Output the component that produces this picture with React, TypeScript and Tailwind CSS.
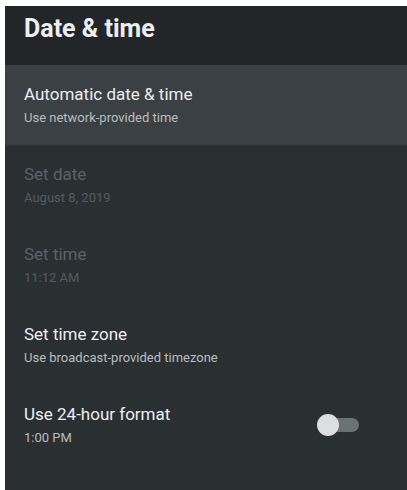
export default function App() {
  const rows = [
    { title: 'Automatic date & time', sub: 'Use network-provided time', active: true },
    { title: 'Set date', sub: 'August 8, 2019', disabled: true },
    { title: 'Set time', sub: '11:12 AM', disabled: true },
    { title: 'Set time zone', sub: 'Use broadcast-provided timezone' },
    { title: 'Use 24-hour format', sub: '1:00 PM', toggle: true },
  ];

  return (
    <div className="w-[407px] h-[490px] bg-white pl-[5px] pt-[6px] overflow-hidden" style={{ fontFamily: 'Roboto, "Noto Sans", sans-serif' }}>
      <div className="h-full bg-[#2a2f32] flex flex-col">
        <div className="h-[59px] bg-[#222628] pl-[19px] flex items-center pb-[14px]">
          <h1 className="text-[25px] leading-[30px] font-bold text-[#eceeef]">Date &amp; time</h1>
        </div>
        {rows.map((r) => (
          <div
            key={r.title}
            className={`h-[80px] pl-[19px] pr-[48px] flex items-center justify-between ${r.active ? 'bg-[#3a4043]' : ''}`}
          >
            <div className="flex flex-col">
              <span className={`text-[17px] leading-[20px] ${r.disabled ? 'text-[#5c6266]' : 'text-[#eceeef]'}`}>{r.title}</span>
              <span className={`text-[13px] leading-[16px] mt-[6px] ${r.disabled ? 'text-[#555b5f]' : 'text-[#b9bdbf]'}`}>{r.sub}</span>
            </div>
            {r.toggle && (
              <div className="relative w-[42px] h-[22px] flex items-center">
                <div className="absolute right-0 w-[30px] h-[14px] rounded-full bg-[#6c7174]" />
                <div className="absolute left-0 w-[22px] h-[22px] rounded-full bg-[#dcdedf]" />
              </div>
            )}
          </div>
        ))}
      </div>
    </div>
  );
}
